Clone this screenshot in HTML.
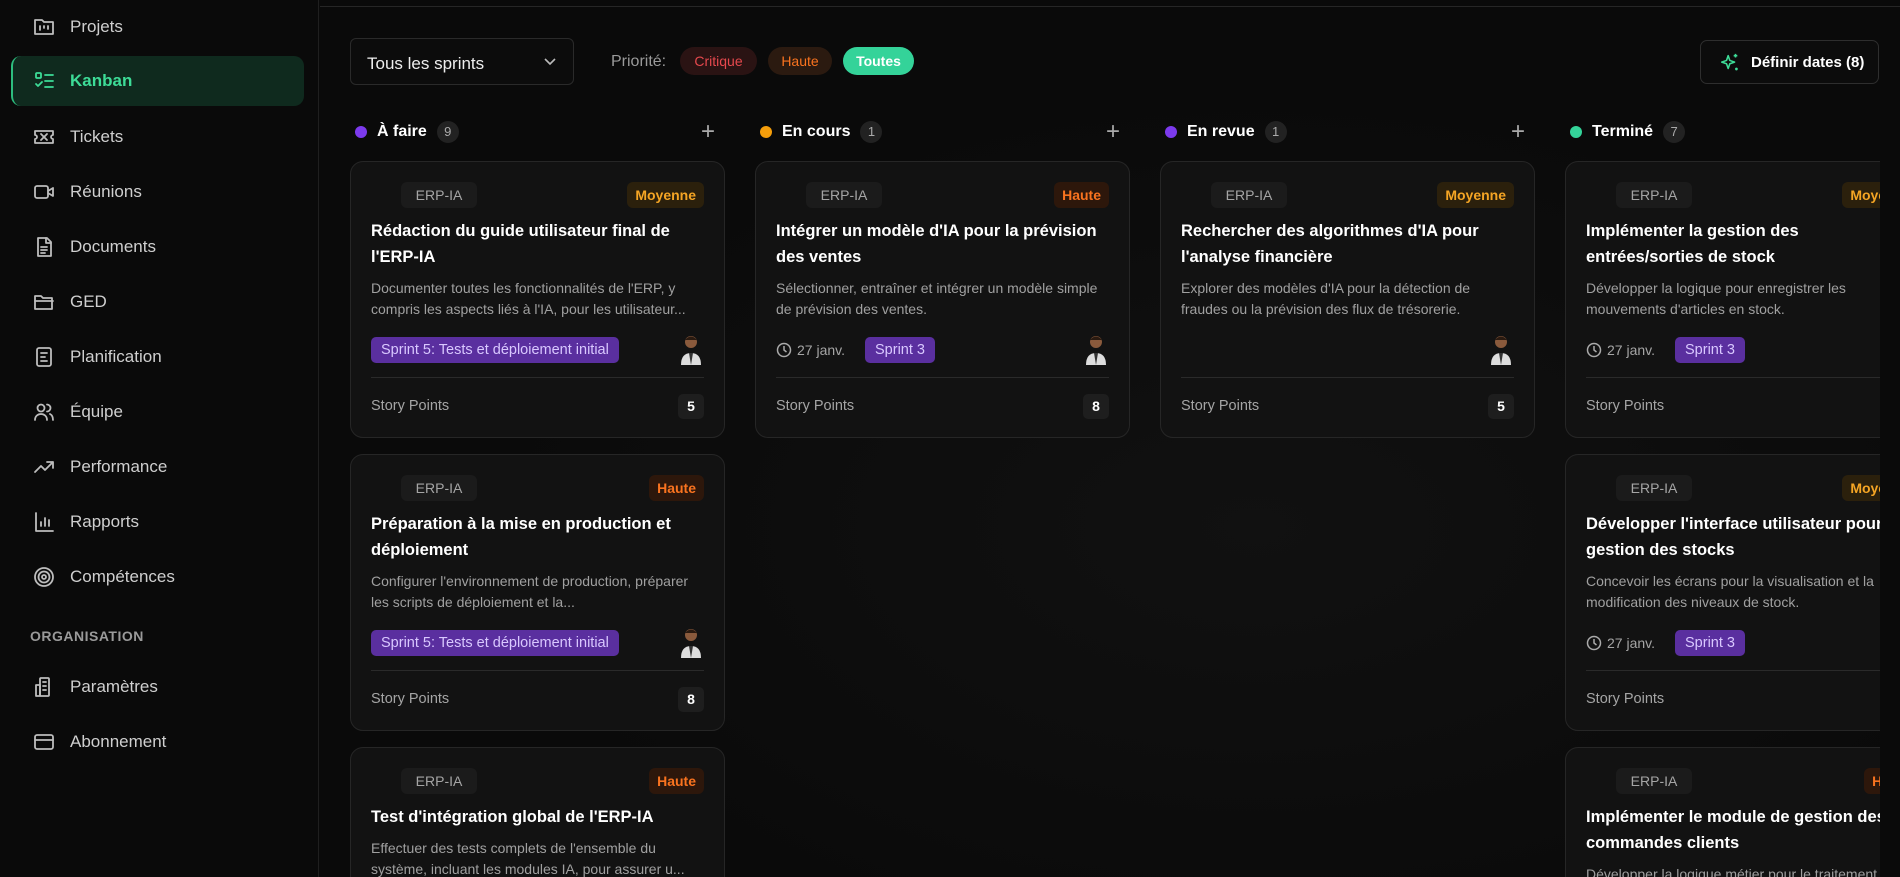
<!DOCTYPE html>
<html><head><meta charset="utf-8"><style>
*{box-sizing:border-box;margin:0;padding:0}
body{width:1900px;height:877px;overflow:hidden;background:#0a0a0a;font-family:"Liberation Sans",sans-serif;color:#fff;position:relative}
.sb{position:absolute;left:0;top:0;width:319px;height:877px;background:#0a0a0a;border-right:1px solid #1f1f1f}
.nav{position:absolute;left:11px;width:293px;height:50px;display:flex;align-items:center;color:#cfcfcf;font-size:17px}
.nav svg{position:absolute;left:21px;width:24px;height:24px;fill:none;stroke:#bdbdbd;stroke-width:1.8;stroke-linecap:round;stroke-linejoin:round}
.nav span{position:absolute;left:59px}
.nav.act{background:#0f2a1e;border-left:2px solid #2dbd7e;border-radius:10px;color:#3ddc97;font-weight:bold}
.nav.act svg{stroke:#3ddc97;left:19px}.nav.act span{left:57px}
.org{position:absolute;left:30px;top:628px;font-size:14px;color:#9a9a9a;letter-spacing:.5px;font-weight:bold}
.main{position:absolute;left:320px;top:0;width:1560px;height:877px;overflow:hidden;background:radial-gradient(ellipse at 60% 60%,#111 0%,#0a0a0a 60%)}
.topline{position:absolute;left:320px;top:6px;width:1580px;height:1px;background:#262626}
.sel{position:absolute;left:30px;top:38px;width:224px;height:47px;border:1px solid #2a2a2a;border-radius:6px;background:#0c0c0c;font-size:17px;padding:15px 0 0 16px;color:#eee}
.sel svg{position:absolute;right:16px;top:17px}
.pl{position:absolute;top:53px;font-size:16px;color:#9a9a9a}
.pill{position:absolute;top:47px;height:28px;border-radius:14px;font-size:14px;display:flex;align-items:center;justify-content:center}
.btn{position:absolute;left:1380px;top:40px;width:179px;height:44px;border:1px solid #2e2e2e;border-radius:7px;background:#0c0c0c;font-size:15px;font-weight:bold;display:flex;align-items:center;padding-left:50px}
.btn svg{position:absolute;left:18px;top:11px}
.ch{position:absolute;top:120px;height:24px;display:flex;align-items:center;font-size:16px;font-weight:bold}
.ch i{display:inline-block;width:12px;height:12px;border-radius:6px;margin:0 10px 0 5px}
.ch b{display:inline-block;min-width:22px;height:22px;border-radius:11px;background:#222;color:#aaa;font-size:13px;font-weight:normal;text-align:center;line-height:22px;margin-left:10px}
.plus{position:absolute;top:118px;color:#aaa;font-size:24px;font-weight:300}
.card{position:absolute;width:375px;height:277px;background:#121212;border:1px solid #262626;border-radius:13px}
.card>*{position:absolute}
.erp{left:50px;top:20px;height:26px;width:76px;background:#1b1b1b;border-radius:6px;color:#a5a5a5;font-size:14px;text-align:center;line-height:26px}
.pr{right:20px;top:20px;height:26px;padding:0 8px;border-radius:6px;font-size:14px;font-weight:bold;line-height:26px}
.moy{background:#2b200c;color:#f5a524}.hau{background:#2d170b;color:#f9731f}
.tt{left:20px;top:56px;width:335px;font-size:16.5px;font-weight:bold;line-height:26px;color:#fff}
.ds{left:20px;top:116px;width:335px;font-size:14px;line-height:21px;color:#a0a0a0}
.sp{top:175px;height:26px;padding:0 10px;background:#5a2f9f;color:#d9c8ff;border-radius:5px;font-size:14.5px;line-height:26px}
.dt{left:20px;top:175px;height:26px;line-height:26px;color:#a5a5a5;font-size:14px;display:flex;align-items:center;gap:5px}
.av{right:20px;top:171px;width:26px;height:32px}
.dv{left:20px;right:20px;top:215px;height:1px;background:#2a2a2a}
.spl{left:20px;top:236px;color:#a5a5a5;font-size:14.5px}
.spn{right:20px;top:232px;width:26px;height:25px;background:#1e1e1e;border-radius:5px;text-align:center;line-height:25px;font-size:14px;font-weight:bold}
</style></head><body>
<div class="sb">
<div class="nav" style="top:2px"><svg viewBox="0 0 24 24"><path d="M3 5h7l2 2h9v12H3z"/><path d="M8 11v4M12 11v2M16 11v3"/></svg><span>Projets</span></div>
<div class="nav act" style="top:56px"><svg viewBox="0 0 24 24"><rect x="4" y="4" width="5" height="5" rx="1"/><path d="M4 15l2 2 4-4M13 6h8M13 12h8M13 18h8"/></svg><span>Kanban</span></div>
<div class="nav" style="top:112px"><svg viewBox="0 0 24 24"><path d="M3 6h18v4a2 2 0 000 4v4H3v-4a2 2 0 000-4z"/><path d="M9 9l6 6M15 9l-6 6"/></svg><span>Tickets</span></div>
<div class="nav" style="top:167px"><svg viewBox="0 0 24 24"><rect x="3" y="6" width="13" height="12" rx="2"/><path d="M16 11l5-3v8l-5-3"/></svg><span>Réunions</span></div>
<div class="nav" style="top:222px"><svg viewBox="0 0 24 24"><path d="M6 3h9l4 4v14H6z"/><path d="M14 3v5h5M9 12h6M9 15h6M9 18h4"/></svg><span>Documents</span></div>
<div class="nav" style="top:277px"><svg viewBox="0 0 24 24"><path d="M3 6h6l2 2h9v11H3z"/><path d="M3 11h18"/></svg><span>GED</span></div>
<div class="nav" style="top:332px"><svg viewBox="0 0 24 24"><rect x="5" y="3" width="14" height="18" rx="2"/><path d="M9 8h6M9 12h4M9 16h6"/></svg><span>Planification</span></div>
<div class="nav" style="top:387px"><svg viewBox="0 0 24 24"><circle cx="9" cy="8" r="3.5"/><path d="M3 20c0-4 3-6 6-6s6 2 6 6M15 4.5a3.5 3.5 0 010 7M18 14c2 1 3 3 3 6"/></svg><span>Équipe</span></div>
<div class="nav" style="top:442px"><svg viewBox="0 0 24 24"><path d="M3 17l6-6 4 4 8-8M15 7h6v6"/></svg><span>Performance</span></div>
<div class="nav" style="top:497px"><svg viewBox="0 0 24 24"><path d="M4 3v18h17M9 16v-4M13 16V8M17 16v-6"/></svg><span>Rapports</span></div>
<div class="nav" style="top:552px"><svg viewBox="0 0 24 24"><circle cx="12" cy="12" r="9"/><circle cx="12" cy="12" r="5.5"/><circle cx="12" cy="12" r="2"/></svg><span>Compétences</span></div>
<div class="org">ORGANISATION</div>
<div class="nav" style="top:662px"><svg viewBox="0 0 24 24"><rect x="8" y="3" width="9" height="18" rx="1"/><path d="M4 10h4v11H4zM11 7h3M11 11h3M11 15h3"/></svg><span>Paramètres</span></div>
<div class="nav" style="top:717px"><svg viewBox="0 0 24 24"><rect x="3" y="5" width="18" height="14" rx="2"/><path d="M3 10h18"/></svg><span>Abonnement</span></div>
</div>
<div class="main">
<div class="sel">Tous les sprints<svg width="14" height="10" viewBox="0 0 14 10"><path d="M2 3l5 5 5-5" fill="none" stroke="#bbb" stroke-width="1.6"/></svg></div>
<div class="pl" style="left:291px">Priorité:</div>
<div class="pill" style="left:360px;width:77px;background:#2a1313;color:#e5484d">Critique</div>
<div class="pill" style="left:448px;width:64px;background:#2b1a10;color:#f9731f">Haute</div>
<div class="pill" style="left:523px;width:71px;background:#34d399;color:#fff;font-weight:bold">Toutes</div>
<div class="btn"><svg width="22" height="22" viewBox="0 0 24 24" fill="none" stroke="#3ddc97" stroke-width="1.7" stroke-linejoin="round"><path d="M10 4l1.8 5.2L17 11l-5.2 1.8L10 18l-1.8-5.2L3 11l5.2-1.8z"/><path d="M18 2v4M16 4h4M19 17v3M17.5 18.5h3"/></svg>Définir dates (8)</div>

<div class="ch" style="left:30px"><i style="background:#7c3aed"></i>À faire<b>9</b></div><div class="plus" style="left:381px">+</div>
<div class="ch" style="left:435px"><i style="background:#f59e0b"></i>En cours<b>1</b></div><div class="plus" style="left:786px">+</div>
<div class="ch" style="left:840px"><i style="background:#7c3aed"></i>En revue<b>1</b></div><div class="plus" style="left:1191px">+</div>
<div class="ch" style="left:1245px"><i style="background:#34d399"></i>Terminé<b>7</b></div>

<div class="card" style="left:30px;top:161px"><div class="erp">ERP-IA</div><div class="pr moy">Moyenne</div><div class="tt" style="width:308px">Rédaction du guide utilisateur final de l'ERP-IA</div><div class="ds">Documenter toutes les fonctionnalités de l'ERP, y compris les aspects liés à l'IA, pour les utilisateur...</div><div class="sp" style="left:20px">Sprint 5: Tests et déploiement initial</div><svg class="av" viewBox="0 0 26 32"><circle cx="13" cy="9" r="6" fill="#8a5a3c"/><path d="M7 7q6-7 12 0" fill="#2a1a10"/><path d="M3 32q0-12 10-12t10 12z" fill="#ddd"/><path d="M11 20h4l-2 12z" fill="#333"/></svg><div class="dv"></div><div class="spl">Story Points</div><div class="spn">5</div></div>
<div class="card" style="left:30px;top:454px"><div class="erp">ERP-IA</div><div class="pr hau">Haute</div><div class="tt" style="width:308px">Préparation à la mise en production et déploiement</div><div class="ds">Configurer l'environnement de production, préparer les scripts de déploiement et la...</div><div class="sp" style="left:20px">Sprint 5: Tests et déploiement initial</div><svg class="av" viewBox="0 0 26 32"><circle cx="13" cy="9" r="6" fill="#8a5a3c"/><path d="M7 7q6-7 12 0" fill="#2a1a10"/><path d="M3 32q0-12 10-12t10 12z" fill="#ddd"/><path d="M11 20h4l-2 12z" fill="#333"/></svg><div class="dv"></div><div class="spl">Story Points</div><div class="spn">8</div></div>
<div class="card" style="left:30px;top:747px"><div class="erp">ERP-IA</div><div class="pr hau">Haute</div><div class="tt">Test d'intégration global de l'ERP-IA</div><div class="ds" style="top:90px">Effectuer des tests complets de l'ensemble du système, incluant les modules IA, pour assurer u...</div></div>
<div class="card" style="left:435px;top:161px"><div class="erp">ERP-IA</div><div class="pr hau">Haute</div><div class="tt">Intégrer un modèle d'IA pour la prévision des ventes</div><div class="ds">Sélectionner, entraîner et intégrer un modèle simple de prévision des ventes.</div><div class="dt"><svg width="16" height="16" viewBox="0 0 16 16" fill="none" stroke="#aaa" stroke-width="1.5"><circle cx="8" cy="8" r="6.5"/><path d="M8 4v4l2.5 2"/></svg>27 janv.</div><div class="sp" style="left:109px">Sprint 3</div><svg class="av" viewBox="0 0 26 32"><circle cx="13" cy="9" r="6" fill="#8a5a3c"/><path d="M7 7q6-7 12 0" fill="#2a1a10"/><path d="M3 32q0-12 10-12t10 12z" fill="#ddd"/><path d="M11 20h4l-2 12z" fill="#333"/></svg><div class="dv"></div><div class="spl">Story Points</div><div class="spn">8</div></div>
<div class="card" style="left:840px;top:161px"><div class="erp">ERP-IA</div><div class="pr moy">Moyenne</div><div class="tt">Rechercher des algorithmes d'IA pour l'analyse financière</div><div class="ds">Explorer des modèles d'IA pour la détection de fraudes ou la prévision des flux de trésorerie.</div><svg class="av" viewBox="0 0 26 32"><circle cx="13" cy="9" r="6" fill="#8a5a3c"/><path d="M7 7q6-7 12 0" fill="#2a1a10"/><path d="M3 32q0-12 10-12t10 12z" fill="#ddd"/><path d="M11 20h4l-2 12z" fill="#333"/></svg><div class="dv"></div><div class="spl">Story Points</div><div class="spn">5</div></div>
<div class="card" style="left:1245px;top:161px"><div class="erp">ERP-IA</div><div class="pr moy">Moyenne</div><div class="tt" style="width:300px">Implémenter la gestion des entrées/sorties de stock</div><div class="ds">Développer la logique pour enregistrer les mouvements d'articles en stock.</div><div class="dt"><svg width="16" height="16" viewBox="0 0 16 16" fill="none" stroke="#aaa" stroke-width="1.5"><circle cx="8" cy="8" r="6.5"/><path d="M8 4v4l2.5 2"/></svg>27 janv.</div><div class="sp" style="left:109px">Sprint 3</div><div class="dv"></div><div class="spl">Story Points</div></div>
<div class="card" style="left:1245px;top:454px"><div class="erp">ERP-IA</div><div class="pr moy">Moyenne</div><div class="tt">Développer l'interface utilisateur pour la gestion des stocks</div><div class="ds">Concevoir les écrans pour la visualisation et la modification des niveaux de stock.</div><div class="dt"><svg width="16" height="16" viewBox="0 0 16 16" fill="none" stroke="#aaa" stroke-width="1.5"><circle cx="8" cy="8" r="6.5"/><path d="M8 4v4l2.5 2"/></svg>27 janv.</div><div class="sp" style="left:109px">Sprint 3</div><div class="dv"></div><div class="spl">Story Points</div></div>
<div class="card" style="left:1245px;top:747px"><div class="erp">ERP-IA</div><div class="pr hau">Haute</div><div class="tt">Implémenter le module de gestion des commandes clients</div><div class="ds">Développer la logique métier pour le traitement des commandes clients.</div></div>
</div>
<div class="topline"></div>
</body></html>
